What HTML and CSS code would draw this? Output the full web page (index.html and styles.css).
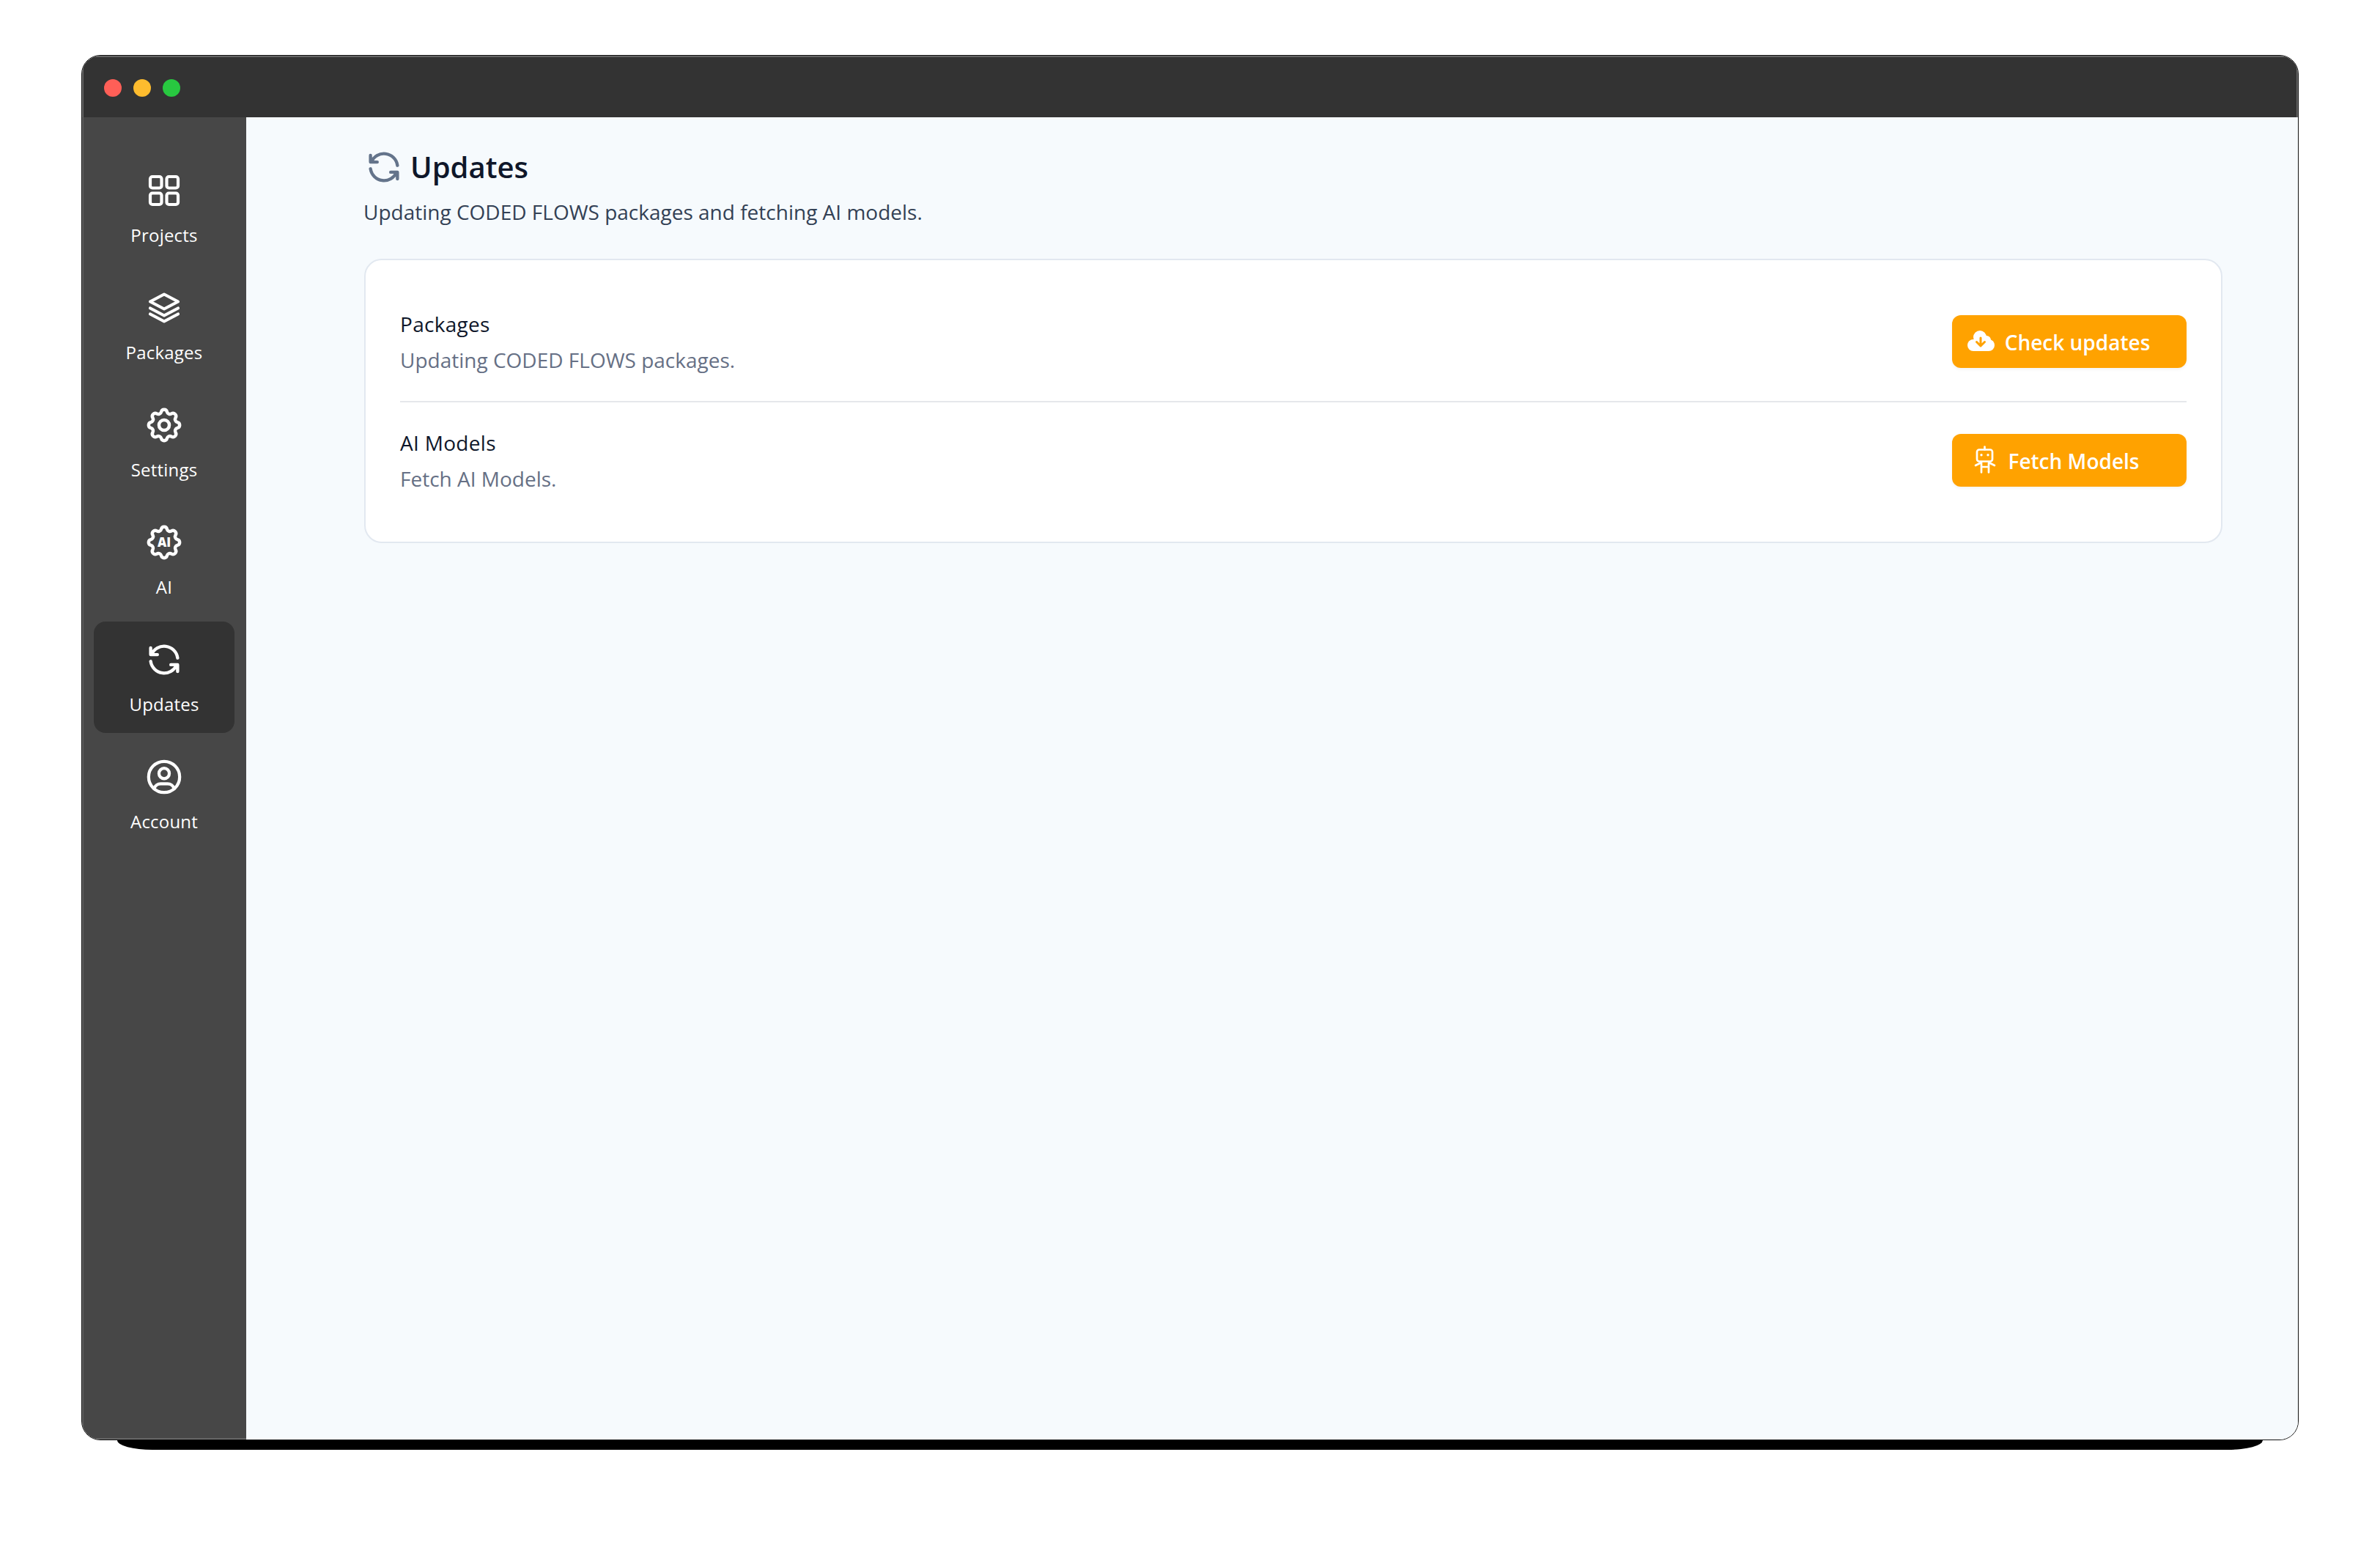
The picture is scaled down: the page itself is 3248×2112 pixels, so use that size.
FILE: index.html
```html
<!DOCTYPE html>
<html lang="en">
  <head>
    <meta charset="utf-8">
    <link rel="stylesheet" href="styles.css">
    <title>Updates</title>
  </head>
  <body>
    <div class="frame">
      <div class="window">
        <div class="titlebar">
          <span class="light red"></span>
          <span class="light yellow"></span>
          <span class="light green"></span>
        </div>
        <div class="body-wrap">
          <nav class="sidebar">
            <a class="nav-item">
              <svg class="nav-icon" viewBox="0 0 48 48" fill="none" stroke="currentColor" stroke-width="4.200">
                <rect x="5" y="5" width="15.500" height="15.500" rx="3"/>
                <rect x="27.500" y="5" width="15.500" height="15.500" rx="3"/>
                <rect x="5" y="27.500" width="15.500" height="15.500" rx="3"/>
                <rect x="27.500" y="27.500" width="15.500" height="15.500" rx="3"/>
              </svg>
              <span>Projects</span>
            </a>
            <a class="nav-item">
              <svg class="nav-icon" viewBox="0 0 48 48" fill="none" stroke="currentColor" stroke-width="4.200" stroke-linejoin="round" stroke-linecap="round">
                <path d="M24 5.500L43 15.500L24 25.500L5 15.500Z"/>
                <path d="M5 24.500L24 34.500L43 24.500"/>
                <path d="M5 32.500L24 42.500L43 32.500"/>
              </svg>
              <span>Packages</span>
            </a>
            <a class="nav-item">
              <svg class="nav-icon" viewBox="1.8 1.8 20.4 20.4" fill="none" stroke="currentColor" stroke-width="1.900">
                <path d="M10.325 4.317c.426 -1.756 2.924 -1.756 3.35 0a1.724 1.724 0 0 0 2.573 1.066c1.543 -.94 3.31 .826 2.37 2.37a1.724 1.724 0 0 0 1.065 2.572c1.756 .426 1.756 2.924 0 3.35a1.724 1.724 0 0 0 -1.066 2.573c.94 1.543 -.826 3.31 -2.37 2.37a1.724 1.724 0 0 0 -2.572 1.065c-.426 1.756 -2.924 1.756 -3.35 0a1.724 1.724 0 0 0 -2.573 -1.066c-1.543 .94 -3.31 -.826 -2.37 -2.37a1.724 1.724 0 0 0 -1.065 -2.572c-1.756 -.426 -1.756 -2.924 0 -3.35a1.724 1.724 0 0 0 1.066 -2.573c-.94 -1.543 .826 -3.31 2.37 -2.37c1 .608 2.296 .07 2.572 -1.065z"/>
                <circle cx="12" cy="12" r="3"/>
              </svg>
              <span>Settings</span>
            </a>
            <a class="nav-item">
              <svg class="nav-icon" viewBox="1.8 1.8 20.4 20.4" fill="none" stroke="currentColor" stroke-width="1.900">
                <path d="M10.325 4.317c.426 -1.756 2.924 -1.756 3.35 0a1.724 1.724 0 0 0 2.573 1.066c1.543 -.94 3.31 .826 2.37 2.37a1.724 1.724 0 0 0 1.065 2.572c1.756 .426 1.756 2.924 0 3.35a1.724 1.724 0 0 0 -1.066 2.573c.94 1.543 -.826 3.31 -2.37 2.37a1.724 1.724 0 0 0 -2.572 1.065c-.426 1.756 -2.924 1.756 -3.35 0a1.724 1.724 0 0 0 -2.573 -1.066c-1.543 .94 -3.31 -.826 -2.37 -2.37a1.724 1.724 0 0 0 -1.065 -2.572c-1.756 -.426 -1.756 -2.924 0 -3.35a1.724 1.724 0 0 0 1.066 -2.573c-.94 -1.543 .826 -3.31 2.37 -2.37c1 .608 2.296 .07 2.572 -1.065z"/>
                <text class="gear-text" x="12" y="14.500">AI</text>
              </svg>
              <span>AI</span>
            </a>
            <a class="nav-item active">
              <svg class="nav-icon" viewBox="1.55 1.55 20.9 20.9" fill="none" stroke="currentColor" stroke-width="1.900" stroke-linecap="round" stroke-linejoin="round">
                <path d="M20 11a8.1 8.1 0 0 0 -15.5 -2m-.5 -4v4h4"/>
                <path d="M4 13a8.1 8.1 0 0 0 15.5 2m.5 4v-4h-4"/>
              </svg>
              <span>Updates</span>
            </a>
            <a class="nav-item">
              <svg class="nav-icon" viewBox="1.8 1.8 20.4 20.4" fill="none" stroke="currentColor" stroke-width="1.800" stroke-linecap="round">
                <circle cx="12" cy="12" r="9"/>
                <circle cx="12" cy="10" r="3"/>
                <path d="M6.168 18.849a4 4 0 0 1 3.832 -2.849h4a4 4 0 0 1 3.834 2.855"/>
              </svg>
              <span>Account</span>
            </a>
          </nav>
          <main class="content">
            <h1 class="page-title">
              <svg class="title-icon" viewBox="1.55 1.55 20.9 20.9" fill="none" stroke="currentColor" stroke-width="1.900" stroke-linecap="round" stroke-linejoin="round">
                <path d="M20 11a8.1 8.1 0 0 0 -15.5 -2m-.5 -4v4h4"/>
                <path d="M4 13a8.1 8.1 0 0 0 15.5 2m.5 4v-4h-4"/>
              </svg>
              Updates
            </h1>
            <p class="page-sub">Updating CODED FLOWS packages and fetching AI models.</p>
            <section class="card">
              <div class="row">
                <div class="row-text">
                  <div class="row-title">Packages</div>
                  <div class="row-desc">Updating CODED FLOWS packages.</div>
                </div>
                <button class="btn btn-check">
                  <svg class="btn-icon" viewBox="0 0 40 40">
                    <g fill="#fff">
                      <circle cx="9" cy="25" r="8"/>
                      <circle cx="30" cy="25" r="8"/>
                      <circle cx="18" cy="14" r="9"/>
                      <circle cx="27" cy="18" r="6"/>
                      <rect x="9" y="20" width="21" height="13"/>
                    </g>
                    <path d="M19 15v11M13.500 20.500l5.500 5.500l5.500 -5.500" fill="none" stroke="#ffa200" stroke-width="3" stroke-linecap="round" stroke-linejoin="round"/>
                  </svg>
                  <span class="btn-label">Check updates</span>
                </button>
              </div>
              <div class="row">
                <div class="row-text">
                  <div class="row-title">AI Models</div>
                  <div class="row-desc">Fetch AI Models.</div>
                </div>
                <button class="btn btn-fetch">
                  <svg class="btn-icon" viewBox="0 0 40 40" fill="none" stroke="#fff" stroke-width="2.700" stroke-linecap="round" stroke-linejoin="round">
                    <rect x="9" y="5.500" width="21" height="16" rx="3"/>
                    <path d="M19.500 1.500v4M15 22v14.500M25 22v14.500M15 29h10M7 27l8 -4M33 27l-8 -4"/>
                    <path d="M15 12.700v.1M24 12.700v.1" stroke-width="3.400"/>
                  </svg>
                  <span class="btn-label">Fetch Models</span>
                </button>
              </div>
            </section>
          </main>
        </div>
      </div>
      <div class="strip"></div>
    </div>
  </body>
</html>
```

FILE: styles.css
```css
* {
  box-sizing: border-box;
}
body {
  margin: 0;
  padding: 75px 0 0 111px;
  background: #fff;
  font-family: "Open Sans", "Noto Sans", sans-serif;
}
.frame {
  display: flex;
  flex-direction: column;
  align-items: center;
  width: 3026px;
}
.strip {
  width: 2928px;
  height: 13px;
  background: #000;
  border-radius: 0 0 48px 48px / 0 0 13px 13px;
}
.window {
  display: flex;
  flex-direction: column;
  width: 100%;
  height: 1890px;
  border: 1px solid #111;
  border-radius: 26px;
  overflow: hidden;
}
.titlebar {
  display: flex;
  align-items: center;
  gap: 16px;
  height: 84px;
  padding: 4px 0 0 30px;
  background: #333;
  box-shadow: inset 0 2px 0 #666, inset 2px 0 0 #666, inset -2px 0 0 #666;
}
.light {
  width: 24px;
  height: 24px;
  border-radius: 50%;
}
.red {
  background: #ff5f57;
}
.yellow {
  background: #febc2e;
}
.green {
  background: #28c840;
}
.body-wrap {
  display: flex;
  flex: 1;
  min-height: 0;
}
.sidebar {
  display: flex;
  flex-direction: column;
  gap: 8px;
  width: 224px;
  padding: 48px 16px 0;
  background: #474747;
  box-shadow: inset 2px 0 0 #5e5e5e, inset 0 -2px 0 #666;
}
.nav-item {
  display: flex;
  flex-direction: column;
  align-items: center;
  height: 152px;
  padding-top: 28px;
  border-radius: 16px;
  color: #fff;
  font-size: 24px;
  font-weight: 500;
  letter-spacing: 0.2px;
  line-height: 32px;
}
.nav-item.active {
  background: #333;
}
.nav-icon {
  width: 48px;
  height: 48px;
  margin-bottom: 21px;
}
.gear-text {
  fill: currentColor;
  stroke: none;
  font-family: "Open Sans", sans-serif;
  font-size: 7.200px;
  font-weight: 800;
  letter-spacing: 0;
  text-anchor: middle;
}
.content {
  flex: 1;
  padding: 44px 103px 0 161px;
  background: #f6fafd;
}
.page-title {
  display: flex;
  align-items: center;
  gap: 12px;
  height: 48px;
  margin: 0 0 0 3px;
  color: #0f172a;
  font-size: 40px;
  font-weight: 600;
  line-height: 48px;
}
.title-icon {
  width: 48px;
  height: 48px;
  color: #64748b;
}
.page-sub {
  margin: 17px 0 44px -1px;
  color: #334155;
  font-size: 28px;
  line-height: 40px;
}
.card {
  padding: 30px 47px;
  background: #fff;
  border: 2px solid #e2e8f0;
  border-radius: 24px;
}
.row {
  display: flex;
  align-items: center;
  justify-content: space-between;
  height: 162px;
}
.row + .row {
  padding-bottom: 2px;
  border-top: 2px solid #e5e7eb;
}
.row-title {
  margin-bottom: 9px;
  color: #0f172a;
  font-size: 28px;
  font-weight: 500;
  letter-spacing: 0.3px;
  line-height: 40px;
}
.row-desc {
  color: #667085;
  font-size: 28px;
  line-height: 40px;
}
.btn {
  display: flex;
  align-items: center;
  justify-content: center;
  gap: 12px;
  width: 320px;
  height: 72px;
  padding: 0;
  border: none;
  border-radius: 12px;
  background: #ffa200;
  box-shadow: 0 2px 4px rgba(0, 0, 0, 0.05);
  color: #fff;
  font-family: inherit;
  font-size: 28px;
  font-weight: 600;
}
.btn-label {
  padding-top: 2px;
}
.btn-check {
  padding-right: 30px;
}
.btn-fetch {
  padding-right: 40px;
}
.btn-icon {
  width: 40px;
  height: 40px;
}
```
